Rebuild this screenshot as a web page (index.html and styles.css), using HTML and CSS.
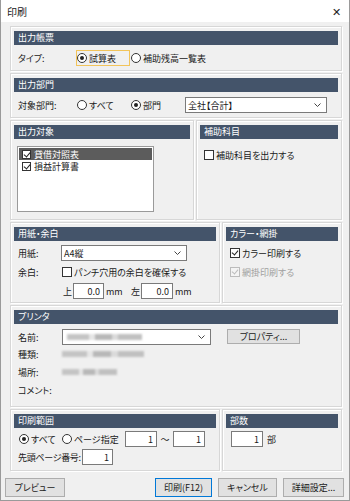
FILE: index.html
```html
<!DOCTYPE html>
<html lang="ja">
<head>
  <meta charset="UTF-8">
  <title>印刷</title>
  <link rel="stylesheet" href="styles.css">
</head>
<body>
  <div class="window">
    <div class="titlebar">
      <span class="title">印刷</span>
      <span class="close">✕</span>
    </div>

    <div class="groups">
      <!-- 出力帳票 -->
      <div class="group g-type">
        <div class="head">出力帳票</div>
        <div class="row">
          <span class="label w59">タイプ:</span>
          <span class="radio focus w54"><i class="dot on"></i>試算表</span>
          <span class="radio"><i class="dot"></i>補助残高一覧表</span>
        </div>
      </div>

      <!-- 出力部門 -->
      <div class="group g-dept">
        <div class="head">出力部門</div>
        <div class="row">
          <span class="label w59">対象部門:</span>
          <span class="radio w54"><i class="dot"></i>すべて</span>
          <span class="radio w54"><i class="dot on"></i>部門</span>
          <span class="select w142">全社【合計】<svg class="chev" width="7" height="4" viewBox="0 0 7 4"><path d="M0.5 0.5 L3.5 3.5 L6.5 0.5" fill="none" stroke="#444"/></svg></span>
        </div>
      </div>

      <div class="pair g-target">
        <!-- 出力対象 -->
        <div class="group left184">
          <div class="head">出力対象</div>
          <div class="listbox">
            <div class="item sel"><i class="check on"></i>貸借対照表</div>
            <div class="item"><i class="check on"></i>損益計算書</div>
          </div>
        </div>
        <!-- 補助科目 -->
        <div class="group side">
          <div class="head">補助科目</div>
          <div class="row pad8 mt8">
            <span class="cb"><i class="check"></i>補助科目を出力する</span>
          </div>
        </div>
      </div>

      <div class="pair g-paper">
        <!-- 用紙・余白 -->
        <div class="group left210">
          <div class="head">用紙・余白</div>
          <div class="row mt4">
            <span class="label w43">用紙:</span>
            <span class="select w126">A4縦<svg class="chev" width="7" height="4" viewBox="0 0 7 4"><path d="M0.5 0.5 L3.5 3.5 L6.5 0.5" fill="none" stroke="#444"/></svg></span>
          </div>
          <div class="row mt3">
            <span class="label w44">余白:</span>
            <span class="cb"><i class="check"></i>パンチ穴用の余白を確保する</span>
          </div>
          <div class="row mt3">
            <span class="label w45"></span>
            <span class="unit-label">上</span>
            <span class="input w31">0.0</span>
            <span class="mm">mm</span>
            <span class="unit-label">左</span>
            <span class="input w32">0.0</span>
            <span class="mm">mm</span>
          </div>
        </div>
        <!-- カラー・網掛 -->
        <div class="group side">
          <div class="head">カラー・網掛</div>
          <div class="row mt4 pad8">
            <span class="cb"><i class="check on"></i>カラー印刷する</span>
          </div>
          <div class="row mt3 pad8">
            <span class="cb disabled"><i class="check on"></i>網掛印刷する</span>
          </div>
        </div>
      </div>

      <!-- プリンタ -->
      <div class="group g-printer">
        <div class="head">プリンタ</div>
        <div class="row mt5">
          <span class="label w44">名前:</span>
          <span class="select w149"><span class="blur b1"></span><svg class="chev" width="7" height="4" viewBox="0 0 7 4"><path d="M0.5 0.5 L3.5 3.5 L6.5 0.5" fill="none" stroke="#444"/></svg></span>
          <span class="button prop">プロパティ...</span>
        </div>
        <div class="row line">
          <span class="label w44">種類:</span>
          <span class="blur b2"></span>
        </div>
        <div class="row line">
          <span class="label w44">場所:</span>
          <span class="blur b3"></span>
        </div>
        <div class="row line">
          <span class="label w44">コメント:</span>
        </div>
      </div>

      <div class="pair g-range">
        <!-- 印刷範囲 -->
        <div class="group left210">
          <div class="head">印刷範囲</div>
          <div class="row mt3 pad9">
            <span class="radio w43"><i class="dot on"></i>すべて</span>
            <span class="radio w63"><i class="dot"></i>ページ指定</span>
            <span class="input w32">1</span>
            <span class="tilde">～</span>
            <span class="input w32">1</span>
          </div>
          <div class="row mt2">
            <span class="label w64">先頭ページ番号:</span>
            <span class="input w31">1</span>
          </div>
        </div>
        <!-- 部数 -->
        <div class="group side">
          <div class="head">部数</div>
          <div class="row mt3 pad9">
            <span class="input w32">1</span>
            <span class="copies">部</span>
          </div>
        </div>
      </div>
    </div>

    <div class="buttons">
      <span class="button w60">プレビュー</span>
      <span class="spacer"></span>
      <span class="button default w57">印刷(F12)</span>
      <span class="button w59">キャンセル</span>
      <span class="button w61">詳細設定...</span>
    </div>
  </div>
</body>
</html>
```

FILE: styles.css
```css
body {
  margin: 0;
  font-family: "Noto Sans CJK JP", "Noto Sans", sans-serif;
  font-size: 9px;
  font-feature-settings: "palt";
  color: #1a1a1a;
  background: #fff;
}
.window {
  width: 350px;
  height: 501px;
  box-sizing: border-box;
  border: 1px solid #9a9a9a;
  border-top: none;
  background: #f0f0f0;
  display: flex;
  flex-direction: column;
}
.titlebar {
  height: 22px;
  background: #fff;
  display: flex;
  align-items: center;
  justify-content: space-between;
  padding: 0 8px 0 6px;
}
.title {
  font-size: 10px;
  color: #222;
}
.close {
  font-size: 11px;
  color: #222;
}
.groups {
  display: flex;
  flex-direction: column;
  gap: 2px;
  padding: 4px 7px 0 9px;
}
.group {
  box-sizing: border-box;
  border: 1px solid #d7d7d7;
  box-shadow: inset 1px 1px 0 #fff, 1px 1px 0 #fff;
}
.head {
  margin: 4px 3px 0;
  height: 14px;
  line-height: 14px;
  background: #44546a;
  color: #fff;
  padding-left: 4px;
}
.g-type, .g-dept { height: 45px; }
.g-printer { height: 102px; }
.pair {
  display: flex;
  gap: 2px;
}
.pair .group { height: 100%; }
.g-target { height: 100px; }
.g-paper { height: 81px; }
.g-range { height: 62px; }
.left184 { width: 184px; }
.left210 { width: 210px; }
.pair .side { flex: 1; }

.row {
  display: flex;
  align-items: center;
  height: 16px;
  margin-top: 5px;
  padding-left: 7px;
  white-space: nowrap;
}
.row.line {
  height: 18px;
  margin-top: 0;
}
.mt2 { margin-top: 2px; }
.mt3 { margin-top: 3px; }
.mt4 { margin-top: 4px; }
.mt5 { margin-top: 5px; }
.mt8 { margin-top: 8px; }
.pad8 { padding-left: 7px; }
.pad9 { padding-left: 8px; }

.label { flex: none; }
.w43 { width: 43px; }
.w44 { width: 44px; }
.w45 { width: 45px; }
.w54 { width: 54px; }
.w59 { width: 59px; }
.w63 { width: 63px; }
.w64 { width: 64px; letter-spacing: -0.3px; }

.radio, .cb {
  display: inline-flex;
  align-items: center;
  gap: 2px;
  flex: none;
  height: 16px;
  box-sizing: border-box;
}
.radio.focus {
  border: 1px solid #f2c45a;
  margin-left: -1px;
  margin-right: 1px;
}
.dot {
  width: 10px;
  height: 10px;
  box-sizing: border-box;
  border: 1px solid #333;
  border-radius: 50%;
  background: #fff;
  display: inline-flex;
  align-items: center;
  justify-content: center;
}
.dot.on::after {
  content: "";
  width: 4px;
  height: 4px;
  border-radius: 50%;
  background: #222;
}
.check {
  width: 10px;
  height: 10px;
  box-sizing: border-box;
  border: 1px solid #333;
  background: #fff;
  display: inline-block;
  position: relative;
  flex: none;
}
.check.on::after {
  content: "";
  position: absolute;
  left: 2px;
  top: 0px;
  width: 3px;
  height: 5px;
  border: solid #222;
  border-width: 0 1px 1px 0;
  transform: rotate(40deg);
}
.cb.disabled { color: #a0a0a0; }
.cb.disabled .check { border-color: #bcbcbc; background: #f4f4f4; }
.cb.disabled .check.on::after { border-color: #bcbcbc; }

.select {
  height: 16px;
  box-sizing: border-box;
  border: 1px solid #7a7a7a;
  background: #fff;
  display: flex;
  align-items: center;
  justify-content: space-between;
  padding: 0 5px 0 2px;
  flex: none;
}
.w142 { width: 142px; }
.w126 { width: 126px; }
.w149 { width: 149px; }

.listbox {
  margin: 7px 0 0 6px;
  width: 137px;
  height: 66px;
  box-sizing: border-box;
  border: 1px solid #9a9a9a;
  background: #fff;
  padding: 1px;
}
.item {
  display: flex;
  align-items: center;
  gap: 3px;
  height: 12px;
  padding-left: 3px;
}
.item.sel {
  background: #5c5c5c;
  color: #fff;
}
.item .check { width: 9px; height: 9px; }

.input {
  height: 16px;
  box-sizing: border-box;
  border: 1px solid #7a7a7a;
  background: #fff;
  display: flex;
  align-items: center;
  justify-content: flex-end;
  padding-right: 3px;
  flex: none;
}
.w31 { width: 31px; }
.w32 { width: 32px; }
.unit-label { width: 10px; flex: none; }
.mm { width: 25px; margin-left: 2px; flex: none; }
.tilde { width: 16px; text-align: center; flex: none; }
.copies { margin-left: 4px; }

.blur {
  display: inline-block;
  height: 6px;
  background: linear-gradient(90deg, #c4c4c4 0 30%, #e6e6e6 30% 38%, #b8b8b8 38% 60%, #dadada 60% 68%, #c0c0c0 68% 100%);
  filter: blur(1px);
}
.b1 { width: 75px; margin-left: 2px; }
.b2 { width: 82px; }
.b3 { width: 55px; }

.button {
  height: 15px;
  box-sizing: border-box;
  border: 1px solid #adadad;
  background: #e1e1e1;
  display: flex;
  align-items: center;
  justify-content: center;
  flex: none;
}
.prop {
  width: 73px;
  margin-left: 16px;
  margin-top: -1px;
}
.buttons {
  display: flex;
  gap: 6px;
  padding: 7px 5px 0 4px;
}
.buttons .button { height: 19px; }
.spacer { flex: 1; }
.button.default { border-color: #0078d7; }
.w57 { width: 57px; }
.w60 { width: 60px; }
.w61 { width: 61px; }
.buttons .w59 { width: 59px; }
```
